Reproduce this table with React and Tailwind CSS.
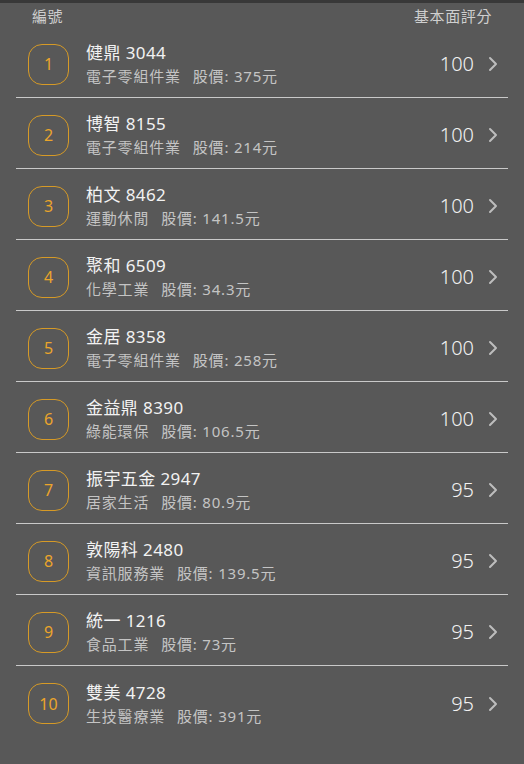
import { ChevronRight } from "lucide-react";

const stocks = [
  { name: "健鼎", code: "3044", industry: "電子零組件業", price: "375", score: 100 },
  { name: "博智", code: "8155", industry: "電子零組件業", price: "214", score: 100 },
  { name: "柏文", code: "8462", industry: "運動休閒", price: "141.5", score: 100 },
  { name: "聚和", code: "6509", industry: "化學工業", price: "34.3", score: 100 },
  { name: "金居", code: "8358", industry: "電子零組件業", price: "258", score: 100 },
  { name: "金益鼎", code: "8390", industry: "綠能環保", price: "106.5", score: 100 },
  { name: "振宇五金", code: "2947", industry: "居家生活", price: "80.9", score: 95 },
  { name: "敦陽科", code: "2480", industry: "資訊服務業", price: "139.5", score: 95 },
  { name: "統一", code: "1216", industry: "食品工業", price: "73", score: 95 },
  { name: "雙美", code: "4728", industry: "生技醫療業", price: "391", score: 95 },
];

function StockRow({ stock, index, last }) {
  return (
    <div
      className={`flex items-center h-[71px] pt-[4px] pl-3 pr-[3px] ${
        last ? "" : "border-b border-[#c9c9c9]"
      }`}
    >
      {/* rank badge */}
      <div className="w-[41px] h-[41px] shrink-0 rounded-[14px] border border-[#d69a26] flex items-center justify-center text-[16px] text-[#eba52b]">
        {index + 1}
      </div>

      <div className="ml-[17px] flex flex-col flex-1 min-w-0">
        <div className="text-[17px] leading-[22px] text-[#f2f2f2] tracking-[0.4px]">
          {stock.name} {stock.code}
        </div>
        <div className="text-[15px] leading-[20px] text-[#c4c4c4] tracking-[0.8px] mt-[2px]">
          {stock.industry}
          <span className="ml-3">股價: {stock.price}元</span>
        </div>
      </div>

      <div className="flex items-center">
        <span className="text-[20px] font-light text-[#f2f2f2]">{stock.score}</span>
        <ChevronRight className="ml-[7px] text-[#bdbdbd]" size={24} strokeWidth={2} />
      </div>
    </div>
  );
}

export default function App() {
  return (
    <div
      className="w-full h-[764px] bg-[#585858] border-t-[3px] border-[#383838]"
      style={{ fontFamily: '"Noto Sans", "Noto Sans CJK TC", sans-serif' }}
    >
      <div className="flex justify-between items-center h-[24px] pt-[2px] px-8 text-[15px] text-[#cfcfcf]">
        <span className="tracking-[0.6px]">編號</span>
        <span className="tracking-[0.6px]">基本面評分</span>
      </div>

      <div className="mx-4">
        {stocks.map((s, i) => (
          <StockRow key={s.code} stock={s} index={i} last={i === stocks.length - 1} />
        ))}
      </div>
    </div>
  );
}
